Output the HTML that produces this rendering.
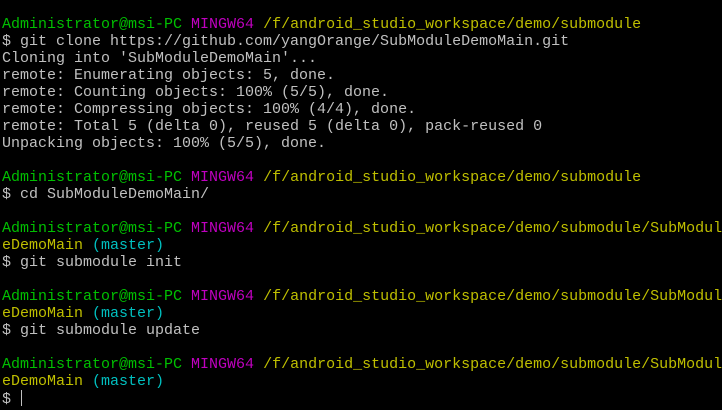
<!DOCTYPE html>
<html><head><style>
html,body{margin:0;padding:0;background:#000;width:722px;height:410px;overflow:hidden}
pre{margin:0;padding:16px 0 0 2px;font-family:"Liberation Mono",monospace;font-size:15px;line-height:17px;color:#c0c0c0;white-space:pre}
.g{color:#00bf00}.m{color:#bf00bf}.y{color:#bfbf00}.c{color:#00bfbf}
.cur{display:inline-block;width:1px;height:16px;background:#c0c0c0;vertical-align:-3px;margin-left:1px}
</style></head><body><pre><span class="g">Administrator@msi-PC</span> <span class="m">MINGW64</span> <span class="y">/f/android_studio_workspace/demo/submodule</span>
$ git clone https://github.com/yangOrange/SubModuleDemoMain.git
Cloning into 'SubModuleDemoMain'...
remote: Enumerating objects: 5, done.
remote: Counting objects: 100% (5/5), done.
remote: Compressing objects: 100% (4/4), done.
remote: Total 5 (delta 0), reused 5 (delta 0), pack-reused 0
Unpacking objects: 100% (5/5), done.

<span class="g">Administrator@msi-PC</span> <span class="m">MINGW64</span> <span class="y">/f/android_studio_workspace/demo/submodule</span>
$ cd SubModuleDemoMain/

<span class="g">Administrator@msi-PC</span> <span class="m">MINGW64</span> <span class="y">/f/android_studio_workspace/demo/submodule/SubModul</span>
<span class="y">eDemoMain</span> <span class="c">(master)</span>
$ git submodule init

<span class="g">Administrator@msi-PC</span> <span class="m">MINGW64</span> <span class="y">/f/android_studio_workspace/demo/submodule/SubModul</span>
<span class="y">eDemoMain</span> <span class="c">(master)</span>
$ git submodule update

<span class="g">Administrator@msi-PC</span> <span class="m">MINGW64</span> <span class="y">/f/android_studio_workspace/demo/submodule/SubModul</span>
<span class="y">eDemoMain</span> <span class="c">(master)</span>
$ <span class="cur"></span></pre></body></html>
